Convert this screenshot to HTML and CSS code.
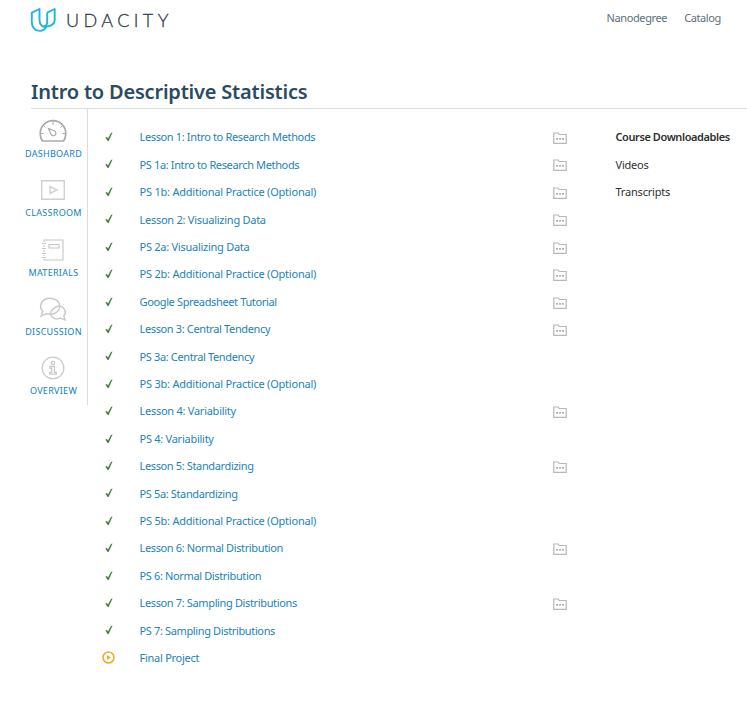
FILE: index.html
```html
<!DOCTYPE html>
<html lang="en">
<head>
<meta charset="utf-8">
<title>Intro to Descriptive Statistics</title>
<link rel="stylesheet" href="styles.css">
</head>
<body>
<svg class="symbols" aria-hidden="true">
  <symbol id="check" viewBox="0 0 8 10"><path d="M.6 5.8 1.8 5.1 3 6.8 6.1 1 7.3.7 3.5 9H2.8Z" fill="#347c38" stroke="#347c38" stroke-width=".2"/></symbol>
  <symbol id="folder" viewBox="0 0 14 12"><path d="M.8 11.4V1H5.2L6.2 2.5H13.2V11.4Z" fill="none" stroke="#b8b8b8" stroke-width="1.2"/><path d="M3.3 6.9H4.8M6.3 6.9H7.8M9.3 6.9H10.8" stroke="#777" stroke-width="1.2"/></symbol>
</svg>
<header class="top">
  <a class="brand">
    <svg class="mark" viewBox="0 0 26 25" fill="none" stroke="#1fb5df" stroke-width="1.9" stroke-linejoin="round"><path d="M1.8 5.6 9.5 2V13C9.5 15.5 10.2 17.3 11.8 18.7C13.2 19.7 14.7 20 16.3 19.6C15 22.3 12.6 23.9 9.8 23.9C4.7 23.9 1.8 20.1 1.8 15.2Z"/><path d="M17.2 5.6 24.7 2V13C24.7 16.6 21.8 18.9 16.3 19.6M17.2 5.6 24.7 2M17.2 5.6V15.6C17.2 17.6 15.8 19.1 13.4 19.4"/></svg>
    <span class="wordmark">UDACITY</span>
  </a>
  <nav class="links"><a>Nanodegree</a><a>Catalog</a></nav>
</header>
<h1><span>Intro to Descriptive Statistics</span></h1>
<div class="content">
  <nav class="side">
    <a><svg viewBox="0 0 30 26" fill="none" stroke="#aaa" stroke-width="1.7"><path d="M4.4 23Q2.2 20 2.2 15.5C2.2 8 8 2.7 15 2.7S27.8 8 27.8 15.5Q27.8 20 25.6 23Z" stroke-linejoin="round"/><path d="M15 3V7M5.5 7.5 7.4 9.4M24.5 7.5 22.6 9.4M3 15.5H5.5M24.5 15.5H27" stroke-width="1"/><path d="M10.5 10.5 16.8 13A2.6 2.6 0 1 1 12.8 15.8Z" stroke-width="1.2"/></svg><span>DASHBOARD</span></a>
    <a><svg viewBox="0 0 30 26" fill="none" stroke="#d0d0d0" stroke-width="1.4"><path d="M3.7 3.7H26.3V22.3H3.7ZM12 9.7 19 13 12 16.3Z"/></svg><span>CLASSROOM</span></a>
    <a><svg viewBox="0 0 30 26" fill="none" stroke="#c5c5c5" stroke-width="1.1"><path d="M6 5V3H25V23H6V22M6 8V10M6 13V15M6 18V19M4 6.5H8M4 11.5H8M4 16.5H8M4 20.5H8M11 7.5H21V11H11Z"/></svg><span>MATERIALS</span></a>
    <a><svg viewBox="0 0 30 26" fill="none" stroke="#cacaca" stroke-width="1.4"><path d="M3.1 20.1 4.8 15.5C1 11.7 2.3 5.7 6.8 3.5C12.5.6 20.8 3 21.6 9.6C22.3 16.3 14.6 19.4 8.3 17.8Z"/><path d="M21.7 9.8C27 11.4 29 16.4 25.8 20L27 24 22.7 22.2C18 24.1 13.6 22 12.4 18.4M12.4 18C13 14 17 10.4 21.7 9.8"/></svg><span>DISCUSSION</span></a>
    <a><svg viewBox="0 0 30 26" fill="none" stroke="#cacaca" stroke-width="1.3"><circle cx="15" cy="13" r="10.8"/><circle cx="15" cy="8" r="1.7"/><path d="M12 11.5H16.5V17.3H18.3V19.2H11.8V17.3H13.7V13.3H12Z"/></svg><span>OVERVIEW</span></a>
  </nav>
  <ul class="lessons">
    <li><svg class="check"><use href="#check"/></svg><a>Lesson 1: Intro to Research Methods</a><svg class="folder"><use href="#folder"/></svg></li>
    <li><svg class="check"><use href="#check"/></svg><a>PS 1a: Intro to Research Methods</a><svg class="folder"><use href="#folder"/></svg></li>
    <li><svg class="check"><use href="#check"/></svg><a class="optional">PS 1b: Additional Practice (Optional)</a><svg class="folder"><use href="#folder"/></svg></li>
    <li><svg class="check"><use href="#check"/></svg><a class="short">Lesson 2: Visualizing Data</a><svg class="folder"><use href="#folder"/></svg></li>
    <li><svg class="check"><use href="#check"/></svg><a class="short">PS 2a: Visualizing Data</a><svg class="folder"><use href="#folder"/></svg></li>
    <li><svg class="check"><use href="#check"/></svg><a class="optional">PS 2b: Additional Practice (Optional)</a><svg class="folder"><use href="#folder"/></svg></li>
    <li><svg class="check"><use href="#check"/></svg><a>Google Spreadsheet Tutorial</a><svg class="folder"><use href="#folder"/></svg></li>
    <li><svg class="check"><use href="#check"/></svg><a>Lesson 3: Central Tendency</a><svg class="folder"><use href="#folder"/></svg></li>
    <li><svg class="check"><use href="#check"/></svg><a>PS 3a: Central Tendency</a></li>
    <li><svg class="check"><use href="#check"/></svg><a class="optional">PS 3b: Additional Practice (Optional)</a></li>
    <li><svg class="check"><use href="#check"/></svg><a class="short">Lesson 4: Variability</a><svg class="folder"><use href="#folder"/></svg></li>
    <li><svg class="check"><use href="#check"/></svg><a class="short">PS 4: Variability</a></li>
    <li><svg class="check"><use href="#check"/></svg><a>Lesson 5: Standardizing</a><svg class="folder"><use href="#folder"/></svg></li>
    <li><svg class="check"><use href="#check"/></svg><a>PS 5a: Standardizing</a></li>
    <li><svg class="check"><use href="#check"/></svg><a class="optional">PS 5b: Additional Practice (Optional)</a></li>
    <li><svg class="check"><use href="#check"/></svg><a>Lesson 6: Normal Distribution</a><svg class="folder"><use href="#folder"/></svg></li>
    <li><svg class="check"><use href="#check"/></svg><a>PS 6: Normal Distribution</a></li>
    <li><svg class="check"><use href="#check"/></svg><a>Lesson 7: Sampling Distributions</a><svg class="folder"><use href="#folder"/></svg></li>
    <li><svg class="check"><use href="#check"/></svg><a>PS 7: Sampling Distributions</a></li>
    <li><svg class="play" viewBox="0 0 13 13"><circle cx="6.5" cy="6.5" r="5.5" fill="none" stroke="#f5ab2e" stroke-width="1.6"/><path d="M5 3.9 9 6.5 5 9.1Z" fill="#f5ab2e"/></svg><a class="short">Final Project</a></li>
  </ul>
  <aside class="downloads">
    <strong>Course Downloadables</strong>
    <a>Videos</a>
    <a>Transcripts</a>
  </aside>
</div>
</body>
</html>
```
FILE: styles.css
```css
* { box-sizing: border-box; }
body {
  margin: 0;
  background: #fff;
  color: #303030;
  font: 11px/27.42px "Noto Sans", "Open Sans", sans-serif;
  overflow: hidden;
}
.symbols { display: none; }
.top {
  display: flex;
  justify-content: space-between;
  height: 72px;
  padding: 7px 26px 0 30px;
}
.brand { display: flex; gap: 10px; height: 25px; }
.mark { width: 26px; height: 25px; }
.wordmark {
  font: 300 18px/26px Lato, sans-serif;
  letter-spacing: 4.4px;
  color: #303b4b;
  -webkit-text-stroke: .3px #303b4b;
}
.links { display: flex; gap: 17px; line-height: 22px; letter-spacing: -.38px; color: #5c6f7c; }
h1 {
  margin: 0 0 0 31px;
  height: 37px;
  border-bottom: 1px solid #ddd;
  color: #2b4a63;
  font-size: 20px;
  font-weight: 600;
  line-height: 39px;
  letter-spacing: -.2px;
}
.content { display: flex; align-items: flex-start; }
.side {
  width: 88px;
  height: 296px;
  padding: 9px 0 0 20px;
  border-right: 1px solid #ddd;
  font-size: 9px;
  line-height: 14px;
  letter-spacing: .3px;
  color: #0e7fbf;
}
.side a {
  display: flex;
  flex-direction: column;
  align-items: center;
  height: 59.25px;
}
.side svg { width: 30px; height: 26px; margin: 0 1px 3px 0; }
.lessons {
  list-style: none;
  width: 479px;
  margin: 0;
  padding: 14.38px 0 0 14px;
  color: #1b83ba;
}
.lessons li {
  display: grid;
  grid-template-columns: 13px 438px 14px;
  align-items: center;
  height: 27.42px;
}
.lessons a { padding-left: 24.5px; white-space: nowrap; letter-spacing: -.36px; }
.lessons .optional { letter-spacing: -.22px; }
.lessons .short { letter-spacing: -.26px; }
.check { width: 8px; height: 10px; justify-self: center; }
.play { width: 13px; height: 13px; }
.folder { width: 14px; height: 12px; justify-self: end; margin-top: 2px; }
.downloads {
  display: flex;
  flex-direction: column;
  margin-left: 48.5px;
  padding-top: 14.38px;
  white-space: nowrap;
  letter-spacing: -.2px;
}
.downloads strong { font-weight: 600; letter-spacing: -.42px; }
```
